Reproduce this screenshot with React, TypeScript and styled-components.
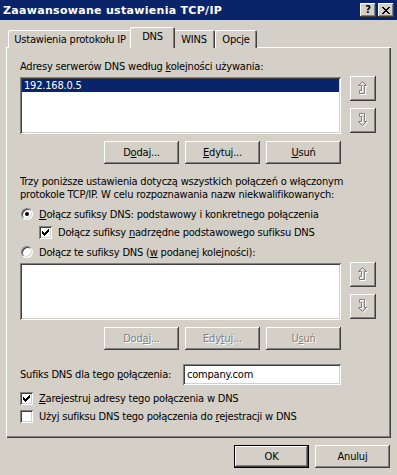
import React from "react";
import styled, { createGlobalStyle } from "styled-components";

const GlobalStyle = createGlobalStyle`
  html, body {
    margin: 0;
    padding: 0;
    background: #d4d0c8;
  }
  body {
    font-family: "DejaVu Sans Condensed", "DejaVu Sans", sans-serif;
    font-size: 11px;
  }
`;

const FACE = "#d4d0c8";
const SHADOW = "#808080";
const DARK = "#404040";

const raised = `
  box-shadow: inset -1px -1px ${DARK}, inset 1px 1px #fff,
    inset -2px -2px ${SHADOW}, inset 2px 2px ${FACE};
`;

const sunken = `
  box-shadow: inset 1px 1px ${SHADOW}, inset -1px -1px #fff,
    inset 2px 2px ${DARK}, inset -2px -2px ${FACE};
`;

const Window = styled.div`
  width: 397px;
  height: 475px;
  overflow: hidden;
  background: ${FACE};
  display: flex;
  flex-direction: column;
  color: #000;
  line-height: 13px;
  letter-spacing: -0.2px;
`;

const TitleBar = styled.div`
  height: 20px;
  background: #0a246a;
  display: flex;
  align-items: center;
  padding: 0 3px 0 3px;
  gap: 2px;
`;

const TitleText = styled.div`
  flex: 1;
  color: #fff;
  font-family: "DejaVu Sans", sans-serif;
  font-weight: bold;
  font-size: 11px;
  letter-spacing: 0.3px;
`;

const CaptionButton = styled.div`
  width: 16px;
  height: 14px;
  background: ${FACE};
  ${raised}
  display: flex;
  align-items: center;
  justify-content: center;
  font-weight: bold;
  font-size: 11px;
  line-height: 14px;
  letter-spacing: 0;
`;

const Body = styled.div`
  flex: 1;
  display: flex;
  flex-direction: column;
  padding: 7px 6px 0 6px;
`;

const TabStrip = styled.div`
  display: flex;
  align-items: flex-end;
  height: 21px;
  padding-left: 2px;
  margin-bottom: -1px;
  position: relative;
  z-index: 1;
`;

const Tab = styled.div<{ $w: number; $active?: boolean }>`
  width: ${(p) => p.$w + (p.$active ? 4 : 0)}px;
  height: ${(p) => (p.$active ? 21 : 18)}px;
  margin: 0 ${(p) => (p.$active ? -2 : 0)}px;
  box-sizing: border-box;
  background: ${FACE};
  border-top-left-radius: 2px;
  border-top-right-radius: 2px;
  box-shadow: inset 1px 1px #fff, inset -1px 0 ${DARK}, inset -2px 0 ${SHADOW};
  display: flex;
  align-items: center;
  justify-content: center;
  padding-bottom: ${(p) => (p.$active ? 3 : 0)}px;
  position: relative;
  z-index: ${(p) => (p.$active ? 2 : 0)};
`;

const Panel = styled.div`
  width: 385px;
  height: 391px;
  box-sizing: border-box;
  background: ${FACE};
  box-shadow: inset 1px 1px #fff, inset -1px -1px ${DARK},
    inset -2px -2px ${SHADOW};
  padding: 13px 14px 0 14px;
  display: flex;
  flex-direction: column;
`;

const Label = styled.div<{ $mt?: number }>`
  margin-top: ${(p) => p.$mt ?? 0}px;
  white-space: nowrap;
`;

const Paragraph = styled.div<{ $mt?: number }>`
  margin-top: ${(p) => p.$mt ?? 0}px;
  white-space: nowrap;
`;

const U = styled.span`
  text-decoration: underline;
  text-underline-offset: 1px;
`;

const ListRow = styled.div<{ $mt: number }>`
  margin-top: ${(p) => p.$mt}px;
  display: flex;
  gap: 9px;
`;

const ListBox = styled.div`
  width: 321px;
  height: 57px;
  box-sizing: border-box;
  background: #fff;
  ${sunken}
  padding: 2px;
`;

const ListItem = styled.div<{ $selected?: boolean }>`
  height: 13px;
  padding-left: 2px;
  background: ${(p) => (p.$selected ? "#0a246a" : "transparent")};
  color: ${(p) => (p.$selected ? "#fff" : "#000")};
`;

const SideButtons = styled.div`
  display: flex;
  flex-direction: column;
  gap: 7px;
  margin-top: -1px;
`;

const Button = styled.div<{ $w?: number; $h?: number; $disabled?: boolean }>`
  width: ${(p) => p.$w ?? 75}px;
  height: ${(p) => p.$h ?? 23}px;
  box-sizing: border-box;
  background: ${FACE};
  ${raised}
  display: flex;
  align-items: center;
  justify-content: center;
  ${(p) => (p.$disabled ? `color: ${SHADOW}; text-shadow: 1px 1px #fff;` : "")}
`;

const DefaultButton = styled(Button)`
  box-shadow: inset 0 0 0 1px #000, inset -2px -2px ${DARK}, inset 2px 2px #fff,
    inset -3px -3px ${SHADOW};
`;

const ButtonRow = styled.div<{ $mt: number }>`
  margin-top: ${(p) => p.$mt}px;
  display: flex;
  gap: 6px;
  padding-left: 84px;
`;

const OptionRow = styled.div<{ $mt: number; $indent?: number }>`
  margin-top: ${(p) => p.$mt}px;
  margin-left: ${(p) => p.$indent ?? 0}px;
  height: 16px;
  display: flex;
  align-items: center;
  gap: 6px;
  white-space: nowrap;
`;

const CheckBox = styled.div`
  width: 13px;
  height: 13px;
  box-sizing: border-box;
  background: #fff;
  ${sunken}
  display: flex;
  align-items: center;
  justify-content: center;
  flex-shrink: 0;
`;

const Radio = styled.div`
  width: 12px;
  height: 12px;
  box-sizing: border-box;
  border-radius: 50%;
  background: #fff;
  border: 1px solid;
  border-color: ${SHADOW} #fff #fff ${SHADOW};
  box-shadow: inset 1px 1px ${DARK}, inset -1px -1px ${FACE};
  display: flex;
  align-items: center;
  justify-content: center;
  flex-shrink: 0;
  margin-left: 1px;
`;

const Dot = styled.div`
  width: 4px;
  height: 4px;
  border-radius: 50%;
  background: #000;
`;

const SuffixRow = styled.div`
  margin-top: 14px;
  display: flex;
  align-items: center;
  justify-content: space-between;
  width: 321px;
`;

const TextInput = styled.div`
  width: 158px;
  height: 21px;
  box-sizing: border-box;
  background: #fff;
  ${sunken}
  padding: 0 4px;
  display: flex;
  align-items: center;
`;

const Footer = styled.div`
  display: flex;
  justify-content: flex-end;
  gap: 6px;
  padding-top: 7px;
  padding-right: 1px;
`;

const Check = () => (
  <svg width="7" height="7" viewBox="0 0 7 7" shapeRendering="crispEdges">
    <path
      d="M0 2h1v1h1v1h1V3h1V2h1V1h1V0h1v3h-1v1h-1v1h-1v1h-1v1H2V6H1V5H0z"
      fill="#000"
    />
  </svg>
);

const UP = "M4.5 0.5 L8.5 4.5 L6.5 4.5 L6.5 12.5 L1.5 12.5 L1.5 9.5 L3.5 9.5 L3.5 4.5 L0.5 4.5 Z";
const DOWN = "M1.5 0.5 L6.5 0.5 L6.5 8.5 L8.5 8.5 L4.5 12.5 L0.5 8.5 L3.5 8.5 L3.5 3.5 L1.5 3.5 Z";

const ArrowIcon = ({ d }: { d: string }) => (
  <svg width="11" height="15" viewBox="0 0 11 15">
    <path d={d} transform="translate(1 1)" fill="none" stroke="#fff" strokeWidth="1" />
    <path d={d} fill="none" stroke={SHADOW} strokeWidth="1" />
  </svg>
);

const CloseIcon = () => (
  <svg width="8" height="7" viewBox="0 0 8 7" shapeRendering="crispEdges">
    <path
      d="M0 0h2v1h1v1h2V1h1V0h2v1H7v1H6v1H5v1h1v1h1v1h1v1H6V6H5V5H3v1H2v1H0V6h1V5h1V4h1V3H2V2H1V1H0z"
      fill="#000"
    />
  </svg>
);

const AddressList = ({ items, mt }: { items: string[]; mt: number }) => (
  <ListRow $mt={mt}>
    <ListBox>
      {items.map((item, i) => (
        <ListItem key={item} $selected={i === 0}>
          {item}
        </ListItem>
      ))}
    </ListBox>
    <SideButtons>
      <Button $w={26} $h={25}>
        <ArrowIcon d={UP} />
      </Button>
      <Button $w={26} $h={25}>
        <ArrowIcon d={DOWN} />
      </Button>
    </SideButtons>
  </ListRow>
);

export default function App() {
  return (
    <Window>
      <GlobalStyle />
      <TitleBar>
        <TitleText>Zaawansowane ustawienia TCP/IP</TitleText>
        <CaptionButton>?</CaptionButton>
        <CaptionButton>
          <CloseIcon />
        </CaptionButton>
      </TitleBar>
      <Body>
        <TabStrip>
          <Tab $w={124}>Ustawienia protokołu IP</Tab>
          <Tab $w={41} $active>
            DNS
          </Tab>
          <Tab $w={42}>WINS</Tab>
          <Tab $w={42}>Opcje</Tab>
        </TabStrip>
        <Panel>
          <Label>
            Adresy serwerów DNS według <U>k</U>olejności używania:
          </Label>
          <AddressList items={["192.168.0.5"]} mt={4} />
          <ButtonRow $mt={7}>
            <Button>
              D<U>o</U>daj...
            </Button>
            <Button>
              <U>E</U>dytuj...
            </Button>
            <Button>
              <U>U</U>suń
            </Button>
          </ButtonRow>
          <Paragraph $mt={11}>
            Trzy poniższe ustawienia dotyczą wszystkich połączeń o włączonym
            <br />
            protokole TCP/IP. W celu rozpoznawania nazw niekwalifikowanych:
          </Paragraph>
          <OptionRow $mt={5}>
            <Radio>
              <Dot />
            </Radio>
            <span>
              <U>D</U>ołącz sufiksy DNS: podstawowy i konkretnego połączenia
            </span>
          </OptionRow>
          <OptionRow $mt={2} $indent={19}>
            <CheckBox>
              <Check />
            </CheckBox>
            <span>
              Dołącz sufiksy <U>n</U>adrzędne podstawowego sufiksu DNS
            </span>
          </OptionRow>
          <OptionRow $mt={4}>
            <Radio />
            <span>
              Dołącz te sufiksy DNS (<U>w</U> podanej kolejności):
            </span>
          </OptionRow>
          <AddressList items={[]} mt={3} />
          <ButtonRow $mt={7}>
            <Button $disabled>
              Dod<U>a</U>j...
            </Button>
            <Button $disabled>
              Edy<U>t</U>uj...
            </Button>
            <Button $disabled>
              U<U>s</U>uń
            </Button>
          </ButtonRow>
          <SuffixRow>
            <span>
              Sufiks DNS dla tego <U>p</U>ołączenia:
            </span>
            <TextInput>company.com</TextInput>
          </SuffixRow>
          <OptionRow $mt={5}>
            <CheckBox>
              <Check />
            </CheckBox>
            <span>
              <U>Z</U>arejestruj adresy tego połączenia w DNS
            </span>
          </OptionRow>
          <OptionRow $mt={2}>
            <CheckBox />
            <span>
              Użyj sufiksu DNS tego połączenia do <U>r</U>ejestracji w DNS
            </span>
          </OptionRow>
        </Panel>
        <Footer>
          <DefaultButton>OK</DefaultButton>
          <Button>Anuluj</Button>
        </Footer>
      </Body>
    </Window>
  );
}
